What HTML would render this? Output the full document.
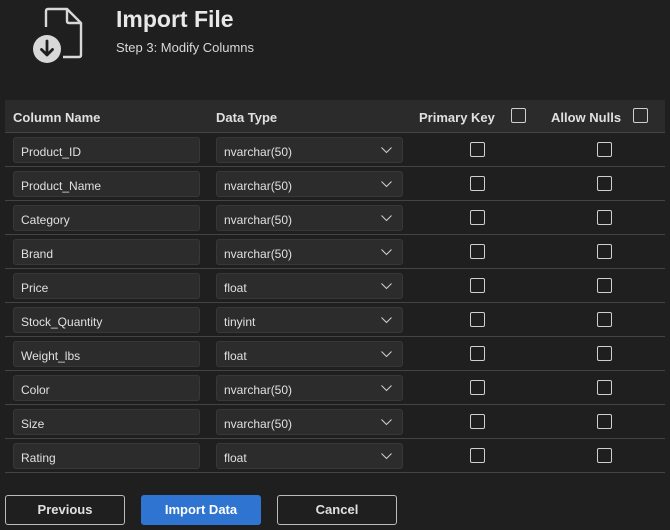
<!DOCTYPE html>
<html><head><style>
*{box-sizing:border-box;margin:0;padding:0}
body{width:670px;height:530px;background:#1f1f1f;font-family:"Liberation Sans",sans-serif;color:#e6e6e6;position:relative;overflow:hidden}
.t{position:absolute;left:116px;top:6px;font-size:23px;font-weight:bold;color:#e8e8e8}
.s{position:absolute;left:116px;top:40px;font-size:13px;color:#d8d8d8}
.hdr{position:absolute;left:5px;top:100px;width:660px;height:33px;background:#2b2b2b;border-bottom:1px solid #444}
.h{position:absolute;top:10px;font-size:13px;font-weight:bold;color:#e0e0e0}
.row{position:absolute;left:5px;width:660px;height:34px;border-bottom:1px solid #444}
.in{position:absolute;left:8px;top:4px;width:187px;height:26px;background:#2c2c2c;border:1px solid #383838;border-radius:3px;font-size:12px;padding:7px 0 0 7px;color:#e0e0e0}
.sel{position:absolute;left:211px;top:4px;width:187px;height:26px;background:#2c2c2c;border:1px solid #383838;border-radius:3px;font-size:12px;padding:7px 0 0 7px;color:#e0e0e0}
.sel svg{position:absolute;right:10px;top:9px}
.cb{position:absolute;width:15px;height:15px;border:1px solid #cfcfcf;border-radius:2px}
.btn{position:absolute;top:495px;width:120px;height:30px;border:1px solid #bbb;border-radius:3px;font-size:13px;font-weight:bold;text-align:center;line-height:28px;color:#e0e0e0}
</style></head><body>
<svg style="position:absolute;left:30px;top:5px" width="56" height="58" viewBox="0 0 56 58">
<path d="M16 22 V6 Q16 4 18 4 H37 L51 18 V50 Q51 52 49 52 H33" fill="none" stroke="#d8d8d8" stroke-width="2.4"/>
<path d="M37 4 V16 Q37 18 39 18 H51" fill="none" stroke="#d8d8d8" stroke-width="2.4"/>
<circle cx="17" cy="44" r="14" fill="#d8d8d8"/>
<path d="M17 36 V50 M11.5 44.5 L17 50 L22.5 44.5" fill="none" stroke="#1f1f1f" stroke-width="2.8" stroke-linecap="round" stroke-linejoin="round"/>
</svg>
<div class="t">Import File</div>
<div class="s">Step 3: Modify Columns</div>
<div class="hdr">
<div class="h" style="left:8px">Column Name</div>
<div class="h" style="left:211px">Data Type</div>
<div class="h" style="left:414px">Primary Key</div>
<div class="cb" style="left:506px;top:8px"></div>
<div class="h" style="left:546px">Allow Nulls</div>
<div class="cb" style="left:628px;top:8px"></div>
</div>
<div id="rows"></div>
<script>
var d=[["Product_ID","nvarchar(50)"],["Product_Name","nvarchar(50)"],["Category","nvarchar(50)"],["Brand","nvarchar(50)"],["Price","float"],["Stock_Quantity","tinyint"],["Weight_lbs","float"],["Color","nvarchar(50)"],["Size","nvarchar(50)"],["Rating","float"]];
var h="";d.forEach(function(r,i){h+='<div class="row" style="top:'+(133+i*34)+'px"><div class="in">'+r[0]+'</div><div class="sel">'+r[1]+'<svg width="11" height="7" viewBox="0 0 11 7"><path d="M0.5 0.5 L5.5 5.5 L10.5 0.5" fill="none" stroke="#ccc" stroke-width="1.1"/></svg></div><div class="cb" style="left:465px;top:9px"></div><div class="cb" style="left:592px;top:9px"></div></div>';});
document.getElementById("rows").innerHTML=h;
</script>
<div class="btn" style="left:5px">Previous</div>
<div class="btn" style="left:141px;background:#2f74d0;border-color:#2f74d0;color:#fff">Import Data</div>
<div class="btn" style="left:277px">Cancel</div>
</body></html>
